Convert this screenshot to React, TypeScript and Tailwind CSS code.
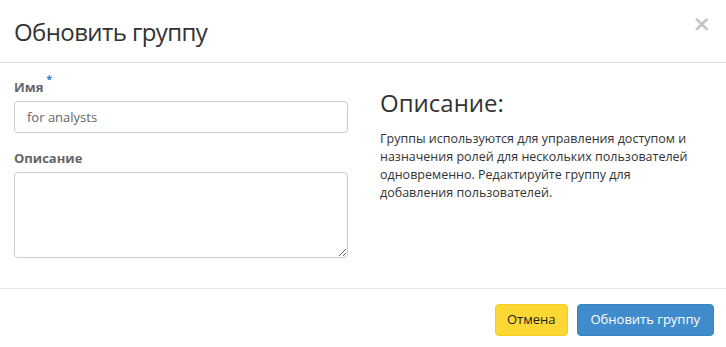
import React from "react";

export default function App() {
  return (
    <div className="w-[726px] h-[347px] bg-white text-[#333] flex flex-col" style={{ fontFamily: '"Open Sans", sans-serif' }}>
      <div className="h-[63px] border-b border-[#e5e5e5] flex items-start justify-between px-[14px] shrink-0">
        <h4 className="text-[24px] leading-[30px] mt-[17px] font-normal text-[#333] tracking-[-0.6px]">Обновить группу</h4>
        <span className="text-[#c4c4c4] text-[22px] leading-none font-bold mt-[13px] mr-[1px]" style={{ fontFamily: '"DejaVu Sans", sans-serif' }}>×</span>
      </div>
      <div className="flex-1 flex px-[14px] pt-[15px]">
        <div className="w-[334px] flex flex-col">
          <label className="text-[13px] font-bold text-[#666] leading-[18px] flex">
            Имя<span className="text-[#2a7ad2] text-[10px] leading-none ml-[3px] -mt-[4px]">*</span>
          </label>
          <input
            className="mt-[5px] h-[32px] w-full border border-[#ccc] rounded-[4px] px-[12px] text-[13px] text-[#666] outline-none"
            defaultValue="for analysts"
          />
          <label className="text-[13px] font-bold text-[#666] leading-[18px] mt-[16px]">Описание</label>
          <textarea className="mt-[5px] h-[86px] w-full border border-[#ccc] rounded-[4px] px-[12px] py-[6px] text-[13px] outline-none" />
        </div>
        <div className="ml-[32px] flex-1 pt-[10px]">
          <h3 className="text-[24px] leading-[30px] font-normal text-[#333]">Описание:</h3>
          <p className="text-[12.5px] leading-[18px] mt-[12px] text-[#333] w-[322px]">
            Группы используются для управления доступом и назначения ролей для нескольких пользователей одновременно. Редактируйте группу для добавления пользователей.
          </p>
        </div>
      </div>
      <div className="h-[59px] border-t border-[#e5e5e5] flex items-start justify-end gap-[9px] pr-[12px] pt-[15px] shrink-0">
        <button className="h-[32px] px-[11px] rounded-[4px] bg-[#fdd835] border border-[#f5cd1e] text-[13px] text-[#222]">Отмена</button>
        <button className="h-[32px] px-[13px] rounded-[4px] bg-[#3f8bcb] border border-[#3a82bf] text-[13px] text-white">Обновить группу</button>
      </div>
    </div>
  );
}
